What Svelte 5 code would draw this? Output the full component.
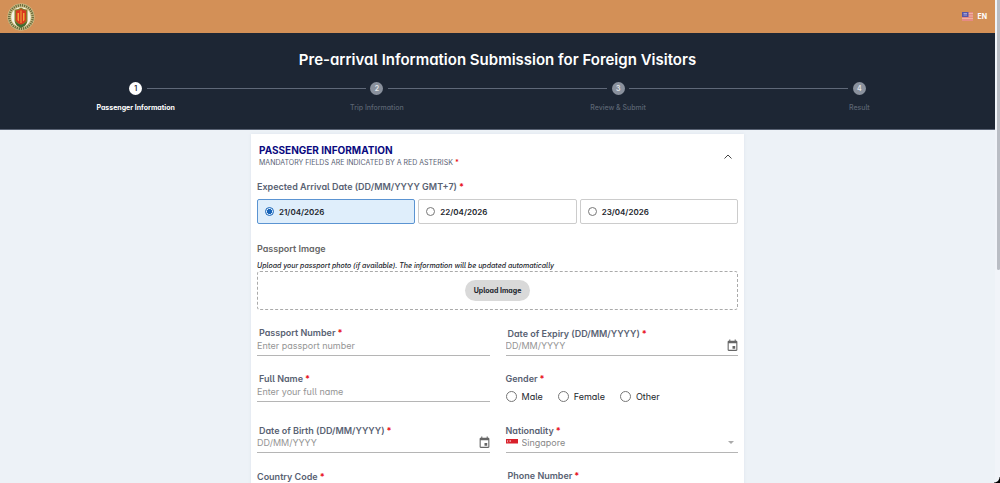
<script>
	const steps = ['Passenger Information', 'Trip Information', 'Review & Submit', 'Result'];
	const dates = ['21/04/2026', '22/04/2026', '23/04/2026'];
	const genders = ['Male', 'Female', 'Other'];

	let currentStep = $state(0);
	let arrival = $state('21/04/2026');
	let gender = $state('');
	let open = $state(true);
</script>

{#snippet star()}<span class="star">*</span>{/snippet}

{#snippet calendar()}
	<svg viewBox="2 0 20 24" width="11" height="13" fill="#666">
		<path d="M19 3h-1V1h-2v2H8V1H6v2H5c-1.100 0-2 .9-2 2v15c0 1.100.9 2 2 2h14c1.100 0 2-.9 2-2V5c0-1.100-.9-2-2-2zm0 17H5V8h14v12zm-7-7h5v5h-5z" />
	</svg>
{/snippet}

<div class="app">
	<div class="page">
		<header class="topbar">
			<a class="logo" href="/" aria-label="Home">
				<svg viewBox="0 0 56 56" width="28" height="28">
					<circle cx="28" cy="28" r="27" fill="#cfc48e" />
					<circle cx="28" cy="28" r="23.500" fill="none" stroke="#6b6b3c" stroke-width="5" stroke-dasharray="2.600 1.700" />
					<circle cx="28" cy="28" r="19.500" fill="#f6f3e6" />
					<path d="M15 13q6 1 13-4 7 5 13 4v23q-1 9-13 13-12-4-13-13z" fill="#8a7a2a" />
					<path d="M16 37q12 12 24 0l-4 8-8 5-8-5z" fill="#3f6b34" />
					<path d="M18 15q6 0 10-3 4 3 10 3v20q-3 6-10 8-7-2-10-8z" fill="#d9371f" />
					<path d="M21 20v14l3 3V20zM32 20v17l3-3V20zM27 15h2v25h-2z" fill="#f0a83a" />
				</svg>
			</a>
			<button class="lang">
				<svg viewBox="0 0 22 18" width="11" height="9">
					<rect width="22" height="18" fill="#e58a84" />
					<path d="M0 3h22M0 8h22M0 13h22" stroke="#edb3a0" stroke-width="2" />
					<rect width="13" height="10" fill="#5656a8" />
					<path d="M3 3h7M3 6h7" stroke="#a4a0d4" stroke-width="2" />
				</svg>
				EN
			</button>
		</header>

		<section class="hero">
			<h1>Pre-arrival Information Submission for Foreign Visitors</h1>
			<ol class="stepper">
				{#each steps as step, i}
					<li class:active={i === currentStep}>
						<span class="num">{i + 1}</span>
						<span class="name">{step}</span>
					</li>
				{/each}
			</ol>
		</section>

		<main class="card">
			<div class="card-head">
				<div>
					<h2>PASSENGER INFORMATION</h2>
					<p>MANDATORY FIELDS ARE INDICATED BY A RED ASTERISK{@render star()}</p>
				</div>
				<button class="toggle" aria-label="Toggle section" onclick={() => (open = !open)}>
					<svg viewBox="0 0 8 5" width="8" height="5" fill="none" stroke="#444">
						<path d="M.5 4.500 4 1l3.500 3.500" />
					</svg>
				</button>
			</div>

			{#if open}
				<fieldset class="arrival">
					<legend>Expected Arrival Date (DD/MM/YYYY GMT+7){@render star()}</legend>
					<div class="dates">
						{#each dates as date}
							<label class="date" class:selected={arrival === date}>
								<input type="radio" name="arrival" value={date} bind:group={arrival} />
								{date}
							</label>
						{/each}
					</div>
				</fieldset>

				<h3>Passport Image</h3>
				<p class="hint">Upload your passport photo (if available). The information will be updated automatically</p>
				<div class="dropzone">
					<button class="upload">Upload Image</button>
				</div>

				<div class="grid">
					<div class="field text">
						<label class="inset" for="passport">Passport Number{@render star()}</label>
						<div class="control"><input id="passport" type="text" placeholder="Enter passport number" /></div>
					</div>
					<div class="field">
						<label class="inset" for="expiry">Date of Expiry (DD/MM/YYYY){@render star()}</label>
						<div class="control">
							<input id="expiry" type="text" placeholder="DD/MM/YYYY" />
							<button class="icon" aria-label="Choose date of expiry">{@render calendar()}</button>
						</div>
					</div>

					<div class="field text">
						<label class="inset" for="fullname">Full Name{@render star()}</label>
						<div class="control"><input id="fullname" type="text" placeholder="Enter your full name" /></div>
					</div>
					<fieldset class="field gender">
						<legend>Gender{@render star()}</legend>
						<div class="options">
							{#each genders as g}
								<label><input type="radio" name="gender" value={g} bind:group={gender} />{g}</label>
							{/each}
						</div>
					</fieldset>

					<div class="field">
						<label class="inset" for="birth">Date of Birth (DD/MM/YYYY){@render star()}</label>
						<div class="control">
							<input id="birth" type="text" placeholder="DD/MM/YYYY" />
							<button class="icon" aria-label="Choose date of birth">{@render calendar()}</button>
						</div>
					</div>
					<div class="field choice">
						<label for="nationality">Nationality{@render star()}</label>
						<div class="control">
							<svg class="flag" viewBox="0 0 24 16" width="12" height="8">
								<rect width="24" height="16" fill="#fff" />
								<rect width="24" height="9" fill="#d8202a" />
								<path d="M5 2a2.500 2.500 0 1 0 0 5 3 3 0 0 1 0-5zM7 3h3v2H7z" fill="#fff" />
							</svg>
							<select id="nationality">
								<option>Singapore</option>
							</select>
							<svg class="caret" viewBox="0 0 6 3" width="6" height="3"><path d="M0 0h6L3 3z" fill="#aaa" /></svg>
						</div>
					</div>

					<div class="field choice">
						<label for="country">Country Code{@render star()}</label>
						<div class="control">
							<select id="country"><option></option></select>
						</div>
					</div>
					<div class="field text">
						<label class="inset" for="phone">Phone Number{@render star()}</label>
						<div class="control"><input id="phone" type="tel" /></div>
					</div>
				</div>
			{/if}
		</main>
	</div>
	<div class="scrollbar"><div class="thumb"></div></div>
	<div class="corner"></div>
</div>

<style>
	:global(body) {
		background: #edf2f7;
	}

	.app {
		position: relative;
		display: flex;
		height: 100vh;
		overflow: hidden;
		background: #edf2f7;
		color: #22252c;
		font-family: Inter, sans-serif;
		font-size: 9px;
		font-feature-settings: 'cv05', 'cv11';
	}

	.app * {
		box-sizing: border-box;
	}

	.page {
		flex: 1;
		min-width: 0;
	}

	button, input, select {
		font: inherit;
		font-feature-settings: inherit;
		color: inherit;
	}

	button {
		padding: 0;
		border: 0;
		background: none;
		cursor: pointer;
	}

	h1, h2, h3, p, ol, fieldset, legend {
		margin: 0;
		padding: 0;
		border: 0;
	}

	svg {
		display: block;
		flex: none;
	}

	.topbar {
		display: flex;
		align-items: center;
		justify-content: space-between;
		height: 33px;
		padding: 0 8px 0 7px;
		background: #d39057;
	}

	.lang {
		display: flex;
		align-items: center;
		gap: 4px;
		color: #fff;
		font-size: 7px;
		font-weight: 700;
	}

	.hero {
		height: 97px;
		padding: 17px 15px 0;
		background: #1d2634;
		border-bottom: 1px solid #596273;
		color: #fff;
		text-align: center;
	}

	h1 {
		font-size: 15px;
		line-height: 20px;
		font-weight: 600;
	}

	.stepper {
		display: grid;
		grid-template-columns: repeat(4, 1fr);
		margin-top: 12px;
		list-style: none;
	}

	.stepper li {
		position: relative;
		display: flex;
		flex-direction: column;
		align-items: center;
		gap: 7px;
		color: #5b6472;
		font-size: 7px;
		line-height: 12px;
		font-weight: 500;
	}

	.stepper li:not(:last-child)::after {
		content: '';
		position: absolute;
		top: 6px;
		left: calc(50% + 11px);
		width: calc(100% - 22px);
		height: 1px;
		background: #5f6878;
	}

	.num {
		width: 13px;
		height: 13px;
		border-radius: 50%;
		background: #8a919d;
		color: #e4e7eb;
		font-size: 7px;
		line-height: 13px;
		font-weight: 600;
	}

	.active .num {
		background: #fff;
		color: #1d2634;
	}

	.stepper .active {
		color: #fff;
		font-weight: 700;
	}

	.card {
		width: 50%;
		max-width: 493px;
		margin: 4px auto 0;
		padding: 10px 6px;
		background: #fff;
		box-shadow: 0 0 3px #dde3ec;
	}

	.card-head {
		display: flex;
		align-items: center;
		justify-content: space-between;
		padding: 0 6px 0 2px;
	}

	h2 {
		color: #0a0a80;
		font-size: 10px;
		line-height: 13px;
		font-weight: 700;
	}

	.card-head p {
		color: #596273;
		font-size: 7px;
		line-height: 12px;
	}

	.star {
		margin-left: 2px;
		color: #e8111c;
		font-weight: 700;
	}

	.arrival {
		margin-top: 13px;
	}

	legend, h3, .field > label {
		color: #596273;
		font-size: 9px;
		line-height: 10px;
		font-weight: 600;
		white-space: nowrap;
	}

	.dates {
		display: grid;
		grid-template-columns: repeat(3, 1fr);
		gap: 3px;
		margin-top: 7px;
	}

	.date {
		display: flex;
		align-items: center;
		gap: 5px;
		height: 25px;
		padding: 0 7px;
		border: 1px solid #ccc;
		border-radius: 2px;
		font-size: 8px;
		font-weight: 600;
	}

	.selected {
		border-color: #5b94d2;
		background: #dfeefb;
	}

	input[type='radio'] {
		appearance: none;
		flex: none;
		width: 9px;
		height: 9px;
		margin: 0;
		border: 1px solid #777;
		border-radius: 50%;
	}

	input[type='radio']:checked {
		border-color: #1763b8;
		background: radial-gradient(circle, #1763b8 50%, transparent 55%);
	}

	h3 {
		margin-top: 20px;
		color: #666;
	}

	.hint {
		margin-top: 7px;
		font-size: 7px;
		line-height: 10px;
		font-style: italic;
		font-weight: 500;
	}

	.dropzone {
		display: flex;
		align-items: center;
		justify-content: center;
		height: 39px;
		border: 1px dashed #aaa;
		border-radius: 3px;
	}

	.upload {
		height: 21px;
		padding: 0 9px;
		border-radius: 11px;
		background: #d9d9d9;
		font-size: 7px;
		font-weight: 700;
	}

	.grid {
		display: grid;
		grid-template-columns: 1fr 1fr;
		grid-template-rows: 46px 46px 51px 46px;
		column-gap: 16px;
		align-items: end;
	}

	.field {
		display: flex;
		flex-direction: column;
		min-width: 0;
	}

	.inset {
		padding-left: 2px;
	}

	.control {
		display: flex;
		align-items: center;
		height: 17px;
		padding-bottom: 3px;
		border-bottom: 1px solid #b5b5b5;
		color: #888;
	}

	.text .control {
		margin-top: 1px;
	}

	.choice .control {
		gap: 4px;
		padding-right: 4px;
	}

	.control input, .control select {
		flex: 1;
		min-width: 0;
		height: 13px;
		padding: 0;
		border: 0;
		outline: 0;
		background: none;
		appearance: none;
	}

	.control input::placeholder {
		color: #959595;
		opacity: 1;
	}

	.options {
		display: flex;
		gap: 15px;
		margin-top: 6px;
	}

	.options label {
		display: flex;
		align-items: center;
		gap: 5px;
		height: 12px;
	}

	.options input[type='radio'] {
		width: 11px;
		height: 11px;
	}

	.scrollbar {
		width: 5px;
		background: #f1f4f9;
	}

	.thumb {
		height: 56%;
		margin-left: 2px;
		border-radius: 0 0 2px 2px;
		background: #b9bdc4;
	}

	.corner {
		position: absolute;
		right: 0;
		bottom: 0;
		width: 6px;
		height: 6px;
		background: radial-gradient(circle at 0 0, transparent 5px, #000 6px);
	}
</style>
